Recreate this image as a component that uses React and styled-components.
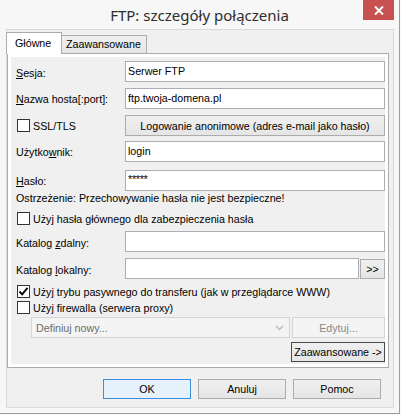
import React from "react";
import styled, { createGlobalStyle, css } from "styled-components";

const Global = createGlobalStyle`
  html, body { margin: 0; padding: 0; background: #f7f7f7; }
  body { font-family: "Liberation Sans", Arial, sans-serif; font-size: 10.7px; color: #000; }
  * { box-sizing: border-box; }
`;

const Window = styled.div`
  width: 400px;
  height: 414px;
  background: #f7f7f7;
  border-right: 1px solid #9c9c9c;
  border-bottom: 1px solid #9c9c9c;
  display: flex;
  flex-direction: column;
`;

const TitleBar = styled.div`
  height: 29px;
  flex: none;
  display: grid;
  grid-template-columns: 1fr auto 1fr;
  align-items: start;
`;

const Title = styled.div`
  grid-column: 2;
  font-family: "Noto Sans", "Open Sans", sans-serif;
  font-size: 15px;
  color: #2d2d2d;
  line-height: 30px;
  white-space: nowrap;
`;

const CloseBtn = styled.div`
  grid-column: 3;
  justify-self: end;
  margin-right: 5px;
  width: 31px;
  height: 20px;
  background: #c75050;
  display: flex;
  align-items: center;
  justify-content: center;
`;

const Body = styled.div`
  flex: 1;
  display: flex;
  padding: 0 5px 5px 6px;
`;

const Client = styled.div`
  flex: 1;
  background: #f0f0f0;
  border: 1px solid #dadada;
  padding-top: 2px;
  display: flex;
  flex-direction: column;
`;

const Tabs = styled.div`
  width: 382px;
  display: flex;
  flex-direction: column;
`;

const TabStrip = styled.div`
  height: 21px;
  display: flex;
  align-items: flex-start;
`;

const Tab = styled.div`
  border: 1px solid #acacac;
  border-bottom: none;
  white-space: nowrap;
  ${(p) =>
    p.$active
      ? css`
          position: relative;
          z-index: 1;
          margin-left: -1px;
          width: 56px;
          height: 22px;
          background: #fff;
          padding: 4px 0 0 8px;
        `
      : css`
          margin-left: -1px;
          margin-top: 3px;
          width: 86px;
          height: 18px;
          background: linear-gradient(#f0f0f0, #e5e5e5);
          padding: 2px 0 0 4px;
        `}
`;

const Pane = styled.div`
  height: 315px;
  border: 1px solid #acacac;
  background: #fff;
  padding: 3px;
  display: flex;
`;

const Page = styled.div`
  flex: 1;
  background: #f0f0f0;
  padding-left: 5px;
  display: flex;
  flex-direction: column;
`;

const FieldRow = styled.div`
  margin-top: ${(p) => p.$mt}px;
  height: ${(p) => p.$h || 21}px;
  display: grid;
  grid-template-columns: 109px 1fr;
  align-items: center;
`;

const Label = styled.div`
  padding-top: ${(p) => p.$dy || 0}px;
  white-space: nowrap;
`;

const TextBox = styled.div`
  height: 21px;
  border: 1px solid #abadb3;
  background: #fff;
  padding: 0 2px;
  line-height: 19px;
  white-space: nowrap;
  overflow: hidden;
`;

const Stars = styled.span`
  font-size: 11px;
  letter-spacing: -0.4px;
  position: relative;
  top: -1px;
`;

const Split = styled.div`
  display: flex;
  align-items: center;
  gap: ${(p) => p.$gap || 0}px;
`;

const TextRow = styled.div`
  margin-top: ${(p) => p.$mt}px;
  height: 13px;
  line-height: 13px;
  white-space: nowrap;
`;

const CheckRow = styled.div`
  margin-top: ${(p) => p.$mt}px;
  height: 13px;
  padding-left: 1px;
  display: flex;
  align-items: center;
  gap: 3px;
  white-space: nowrap;
`;

const Box = styled.span`
  width: 13px;
  height: 13px;
  flex: none;
  border: 1px solid #333;
  background: #fff;
  display: flex;
  align-items: center;
  justify-content: center;
`;

const Button = styled.div`
  height: ${(p) => p.$h || 21}px;
  width: ${(p) => (p.$w ? `${p.$w}px` : "auto")};
  flex: ${(p) => (p.$w ? "none" : "1")};
  border: 1px solid ${(p) => (p.$dark ? "#4a4a4a" : "#acacac")};
  background: linear-gradient(#f0f0f0, #e5e5e5);
  display: flex;
  align-items: center;
  justify-content: center;
  white-space: nowrap;
  ${(p) =>
    p.$disabled &&
    css`
      background: #f4f4f4;
      border-color: #d5d5d5;
      color: #8b8b8b;
    `}
  ${(p) =>
    p.$default &&
    css`
      background: #e5f1fb;
      border-color: #3c8ee0;
    `}
`;

const Combo = styled.div`
  width: 259px;
  height: 21px;
  border: 1px solid #d5d5d5;
  background: #f4f4f4;
  color: #6d6d6d;
  display: flex;
  align-items: center;
  justify-content: space-between;
  padding: 0 5px 0 4px;
`;

const ProxyRow = styled.div`
  margin-top: ${(p) => p.$mt}px;
  height: 21px;
  padding-left: 15px;
  display: flex;
  gap: 2px;
`;

const AdvRow = styled.div`
  margin-top: ${(p) => p.$mt}px;
  height: 20px;
  display: flex;
  justify-content: flex-end;
`;

const ButtonBar = styled.div`
  margin-top: 11px;
  display: flex;
  justify-content: flex-end;
  gap: 7px;
  padding-right: 12px;
`;

const Check = () => (
  <svg width="11" height="11" viewBox="0 0 11 11">
    <path d="M1.5 5.5 L4.2 8.3 L9.5 1.8" fill="none" stroke="#000" strokeWidth="1.9" />
  </svg>
);

const Chevron = () => (
  <svg width="9" height="6" viewBox="0 0 9 6">
    <path d="M1 1 L4.5 4.5 L8 1" fill="none" stroke="#b4b4b4" strokeWidth="1.2" />
  </svg>
);

export default function App() {
  return (
    <>
      <Global />
      <Window>
        <TitleBar>
          <Title>FTP: szczegóły połączenia</Title>
          <CloseBtn>
            <svg width="10" height="9" viewBox="0 0 10 9">
              <path d="M1 0.5 L9 8.5 M9 0.5 L1 8.5" stroke="#fff" strokeWidth="2" />
            </svg>
          </CloseBtn>
        </TitleBar>
        <Body>
          <Client>
            <Tabs>
              <TabStrip>
                <Tab $active>Główne</Tab>
                <Tab>Zaawansowane</Tab>
              </TabStrip>
              <Pane>
                <Page>
                  <FieldRow $mt={4}>
                    <Label $dy={3}><u>S</u>esja:</Label>
                    <TextBox>Serwer FTP</TextBox>
                  </FieldRow>
                  <FieldRow $mt={6}>
                    <Label $dy={1}><u>N</u>azwa hosta[:port]:</Label>
                    <TextBox>ftp.twoja-domena.pl</TextBox>
                  </FieldRow>
                  <FieldRow $mt={6}>
                    <CheckRow $mt={0}>
                      <Box />
                      <span>SSL/TLS</span>
                    </CheckRow>
                    <Button>Logowanie anonimowe (adres e-mail jako hasło)</Button>
                  </FieldRow>
                  <FieldRow $mt={5}>
                    <Label>Użytko<u>w</u>nik:</Label>
                    <TextBox>login</TextBox>
                  </FieldRow>
                  <FieldRow $mt={8}>
                    <Label><u>H</u>asło:</Label>
                    <TextBox><Stars>*****</Stars></TextBox>
                  </FieldRow>
                  <TextRow $mt={1}>Ostrzeżenie: Przechowywanie hasła nie jest bezpieczne!</TextRow>
                  <CheckRow $mt={7}>
                    <Box />
                    <span>Użyj hasła głównego dla zabezpieczenia hasła</span>
                  </CheckRow>
                  <FieldRow $mt={6}>
                    <Label $dy={3}>Katalog <u>z</u>dalny:</Label>
                    <TextBox />
                  </FieldRow>
                  <FieldRow $mt={6}>
                    <Label $dy={3}>Katalog <u>l</u>okalny:</Label>
                    <Split $gap={1}>
                      <TextBox style={{ flex: 1 }} />
                      <Button $w={25} $h={20}>&gt;&gt;</Button>
                    </Split>
                  </FieldRow>
                  <CheckRow $mt={6}>
                    <Box><Check /></Box>
                    <span>Użyj trybu pasywnego do transferu (jak w przeglądarce WWW)</span>
                  </CheckRow>
                  <CheckRow $mt={3}>
                    <Box />
                    <span>Użyj firewalla (serwera proxy)</span>
                  </CheckRow>
                  <ProxyRow $mt={3}>
                    <Combo>
                      <span>Definiuj nowy...</span>
                      <Chevron />
                    </Combo>
                    <Button $w={93} $disabled>Edytuj...</Button>
                  </ProxyRow>
                  <AdvRow $mt={4}>
                    <Button $w={94} $h={20} $dark>Zaawansowane -&gt;</Button>
                  </AdvRow>
                </Page>
              </Pane>
            </Tabs>
            <ButtonBar>
              <Button $w={88} $h={20} $default>OK</Button>
              <Button $w={88} $h={20}>Anuluj</Button>
              <Button $w={88} $h={20}>Pomoc</Button>
            </ButtonBar>
          </Client>
        </Body>
      </Window>
    </>
  );
}
